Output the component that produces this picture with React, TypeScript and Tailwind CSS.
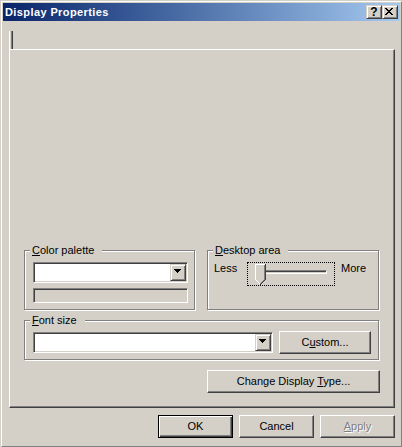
import React from "react";

// classic 3D edges
const raised =
  "border-t border-l border-t-white border-l-white border-r border-b border-r-[#404040] border-b-[#404040] shadow-[inset_-1px_-1px_0_#808080]";
const small3d =
  "border-t border-l border-t-[#d4d0c8] border-l-[#d4d0c8] border-r border-b border-r-[#404040] border-b-[#404040] shadow-[inset_1px_1px_0_#fff,inset_-1px_-1px_0_#808080]";
const sunken =
  "border-t border-l border-t-[#808080] border-l-[#808080] border-r border-b border-r-white border-b-white shadow-[inset_1px_1px_0_#404040,inset_-1px_-1px_0_#d4d0c8]";
const etched = "border border-[#808080] shadow-[inset_1px_1px_0_#fff,1px_1px_0_#fff]";

function Arrow() {
  return (
    <svg width="7" height="4" viewBox="0 0 7 4" shapeRendering="crispEdges" className="block">
      <path d="M0 0h7v1H0zM1 1h5v1H1zM2 2h3v1H2zM3 3h1v1H3z" fill="#000" />
    </svg>
  );
}

function Combo({ className }: { className: string }) {
  return (
    <div className={`flex h-[21px] bg-white p-px ${sunken} ${className}`}>
      <div className={`ml-auto w-[16px] h-[17px] bg-[#d4d0c8] pt-[4px] pl-[3px] ${small3d}`}>
        <Arrow />
      </div>
    </div>
  );
}

function GroupLabel({ children }: { children: React.ReactNode }) {
  return (
    <div className="absolute left-[5px] top-[-7px] bg-[#d4d0c8] pl-[2px] pr-[8px] leading-[13px]">
      {children}
    </div>
  );
}

function Button({
  children,
  className = "",
  isDefault = false,
  disabled = false,
}: {
  children: React.ReactNode;
  className?: string;
  isDefault?: boolean;
  disabled?: boolean;
}) {
  const edge = isDefault
    ? "border border-black shadow-[inset_1px_1px_0_#fff,inset_-1px_-1px_0_#404040,inset_-2px_-2px_0_#808080]"
    : raised;
  return (
    <div
      className={`h-[23px] flex items-center justify-center bg-[#d4d0c8] leading-[13px] ${edge} ${
        disabled ? "text-[#808080] [text-shadow:1px_1px_0_#fff]" : "text-black"
      } ${className}`}
    >
      <span>{children}</span>
    </div>
  );
}

function Thumb() {
  return (
    <svg
      className="absolute left-[7px] top-[1px]"
      width="11"
      height="21"
      viewBox="0 0 11 21"
      shapeRendering="crispEdges"
    >
      <path d="M1 1h8v15H1zM2 16h6v1H2zM3 17h4v1H3zM4 18h2v1H4z" fill="#d4d0c8" />
      <path d="M0 0h10v1H0zM0 0h1v16H0zM1 16h1v1H1zM2 17h1v1H2zM3 18h1v1H3zM4 19h1v1H4z" fill="#fff" />
      <path d="M9 1h1v15H9zM8 16h1v1H8zM7 17h1v1H7zM6 18h1v1H6zM5 19h1v1H5z" fill="#808080" />
      <path d="M10 0h1v16h-1zM9 16h1v1H9zM8 17h1v1H8zM7 18h1v1H7zM6 19h1v1H6zM5 20h1v1H5z" fill="#404040" />
    </svg>
  );
}

export default function App() {
  return (
    <div className="w-[402px] h-[447px] bg-[#d4d0c8] pt-px pl-px overflow-hidden font-['Liberation_Sans',Arial,sans-serif] text-[11px] leading-[13px] text-black">
      <div className="h-full flex flex-col p-px border-t border-l border-t-white border-l-white border-r border-b border-r-[#808080] border-b-[#808080]">
        {/* title bar */}
        <div className="h-[18px] flex items-center pl-[2px] pr-[2px] bg-linear-to-r from-[#0a246a] to-[#a6caf0]">
          <span className="font-bold text-white tracking-[0.4px]">Display Properties</span>
          <div className="ml-auto flex">
            <div className={`w-[16px] h-[14px] bg-[#d4d0c8] flex items-center justify-center font-bold text-[12px] leading-[12px] ${small3d}`}>
              ?
            </div>
            <div className={`w-[16px] h-[14px] bg-[#d4d0c8] pt-[2px] pl-[2px] ${small3d}`}>
              <svg width="8" height="7" viewBox="0 0 8 7" shapeRendering="crispEdges" className="block">
                <path
                  d="M0 0h2v1H0zM6 0h2v1H6zM1 1h2v1H1zM5 1h2v1H5zM2 2h4v1H2zM3 3h2v1H3zM2 4h4v1H2zM1 5h2v1H1zM5 5h2v1H5zM0 6h2v1H0zM6 6h2v1H6z"
                  fill="#000"
                />
              </svg>
            </div>
          </div>
        </div>

        {/* client area */}
        <div className="flex-1 pl-[6px] pt-[10px]">
          <div className="w-[4px] h-[18px] border-l border-white shadow-[inset_-1px_0_0_#404040,inset_-2px_0_0_#808080]" />
          <div className={`w-[386px] h-[359px] pt-[200px] pl-[14px] ${raised}`}>
            <div className="flex">
              <div className={`relative w-[171px] h-[60px] pt-[11px] pl-[8px] ${etched}`}>
                <GroupLabel>
                  <u>C</u>olor palette
                </GroupLabel>
                <Combo className="w-[155px]" />
                <div className={`mt-[5px] w-[155px] h-[15px] bg-[#d4d0c8] ${sunken}`} />
              </div>
              <div className={`relative ml-[12px] w-[172px] h-[60px] pt-[11px] pl-[6px] flex items-start ${etched}`}>
                <GroupLabel>
                  <u>D</u>esktop area
                </GroupLabel>
                <div className="w-[33px]">Less</div>
                <div className="relative w-[88px] h-[24px] border border-dotted border-black">
                  <div className="absolute left-[10px] top-[7px] w-[69px] h-[4px] border-t border-l border-t-[#808080] border-l-[#808080] border-r border-b border-r-white border-b-white shadow-[inset_1px_1px_0_#404040]" />
                  <Thumb />
                </div>
                <div className="ml-[6px]">More</div>
              </div>
            </div>

            <div className={`relative mt-[10px] w-[355px] h-[40px] pt-[10px] pl-[8px] flex items-start ${etched}`}>
              <GroupLabel>
                <u>F</u>ont size
              </GroupLabel>
              <Combo className="mt-px w-[240px]" />
              <Button className="ml-[6px] w-[92px]">
                C<u>u</u>stom...
              </Button>
            </div>

            <Button className="mt-[10px] ml-[183px] w-[173px]">
              Change Display <u>T</u>ype...
            </Button>
          </div>

          <div className="mt-[7px] w-[386px] flex justify-end gap-[6px]">
            <Button isDefault className="w-[75px]">
              OK
            </Button>
            <Button className="w-[75px]">Cancel</Button>
            <Button disabled className="w-[75px]">
              <u>A</u>pply
            </Button>
          </div>
        </div>
      </div>
    </div>
  );
}
